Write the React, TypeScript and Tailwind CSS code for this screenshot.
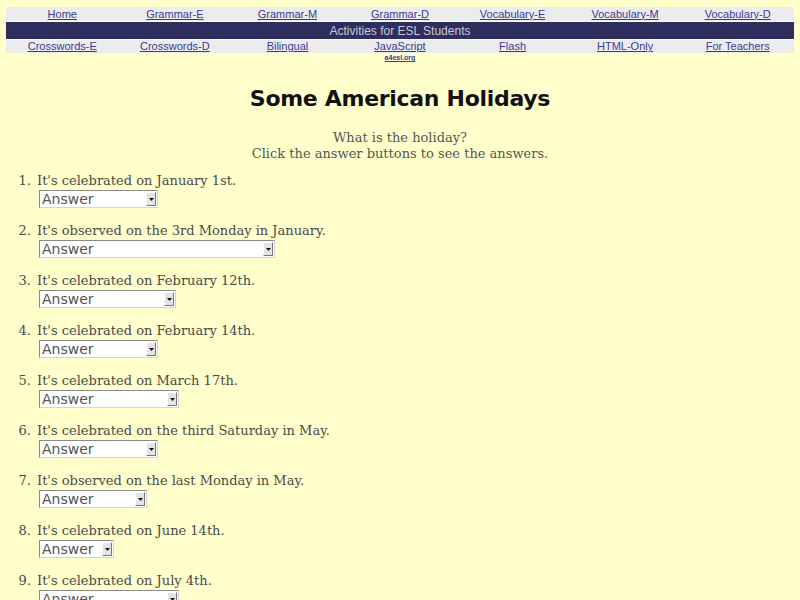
import React from 'react';

const topLinks = ['Home', 'Grammar-E', 'Grammar-M', 'Grammar-D', 'Vocabulary-E', 'Vocabulary-M', 'Vocabulary-D'];
const bottomLinks = ['Crosswords-E', 'Crosswords-D', 'Bilingual', 'JavaScript', 'Flash', 'HTML-Only', 'For Teachers'];

const questions: { text: string; width: string }[] = [
  { text: "It's celebrated on January 1st.", width: 'w-[119px]' },
  { text: "It's observed on the 3rd Monday in January.", width: 'w-[236px]' },
  { text: "It's celebrated on February 12th.", width: 'w-[137px]' },
  { text: "It's celebrated on February 14th.", width: 'w-[119px]' },
  { text: "It's celebrated on March 17th.", width: 'w-[140px]' },
  { text: "It's celebrated on the third Saturday in May.", width: 'w-[119px]' },
  { text: "It's observed on the last Monday in May.", width: 'w-[108px]' },
  { text: "It's celebrated on June 14th.", width: 'w-[75px]' },
  { text: "It's celebrated on July 4th.", width: 'w-[140px]' },
];

const AnswerBox = ({ width }: { width: string }) => (
  <div
    className={`${width} h-[18px] flex items-center justify-between bg-white border border-t-[#8a8a8a] border-l-[#8a8a8a] border-r-[#d4d4d4] border-b-[#d4d4d4] font-['DejaVu_Sans',sans-serif] text-[14px] text-[#555555] leading-none`}
  >
    <span className="pl-[2px]">Answer</span>
    <span className="w-[10px] h-[14px] mr-[1px] bg-[#e4e4e4] border border-t-white border-l-white border-r-[#777777] border-b-[#777777] flex items-center justify-center">
      <svg width="5" height="3" viewBox="0 0 5 3">
        <path d="M0 0 L5 0 L2.5 3 Z" fill="#111" />
      </svg>
    </span>
  </div>
);

export default function App() {
  return (
    <div className="min-h-[600px] bg-[#ffffcc] px-[6px] pt-[7px] pb-4">
      {/* Nav table */}
      <div className="font-['Liberation_Sans',Arial,sans-serif]">
        <div className="grid grid-cols-7 h-[14px] bg-[#ececec] items-center">
          {topLinks.map((l) => (
            <a key={l} className="text-center text-[11px] leading-none text-[#3a3a99] underline">
              {l}
            </a>
          ))}
        </div>
        <div className="h-[17px] bg-[#2e2e5e] flex items-center justify-center text-[12px] text-[#c8c8d8] mt-[1px]">
          Activities for ESL Students
        </div>
        <div className="grid grid-cols-7 h-[13px] bg-[#ececec] items-center mt-[1px]">
          {bottomLinks.map((l) => (
            <a key={l} className="text-center text-[11px] leading-none text-[#3a3a99] underline">
              {l}
            </a>
          ))}
        </div>
        <div className="grid grid-cols-7 h-[10px]">
          <div className="col-start-4 text-center text-[7px] font-bold leading-[10px] text-[#3a3a99] underline">
            a4esl.org
          </div>
        </div>
      </div>

      {/* Title */}
      <h1 className="mt-[21px] text-center font-['DejaVu_Sans',sans-serif] font-bold text-[22px] leading-[30px] text-[#111111] tracking-[-0.3px]">
        Some American Holidays
      </h1>

      <div className="mt-[16px] text-center font-['DejaVu_Serif',serif] text-[13px] leading-[16px] text-[#555555]">
        <p>What is the holiday?</p>
        <p>Click the answer buttons to see the answers.</p>
      </div>

      {/* Questions */}
      <ol className="mt-[11px] font-['DejaVu_Serif',serif] text-[13px] text-[#4a4a4a]">
        {questions.map((q, i) => (
          <li key={i} className="flex mb-[15px]">
            <span className="w-[25px] text-right leading-[16px]">{i + 1}.</span>
            <div className="ml-[6px]">
              <div className="leading-[16px]">{q.text}</div>
              <div className="ml-[2px] mt-[1px]">
                <AnswerBox width={q.width} />
              </div>
            </div>
          </li>
        ))}
      </ol>
    </div>
  );
}
